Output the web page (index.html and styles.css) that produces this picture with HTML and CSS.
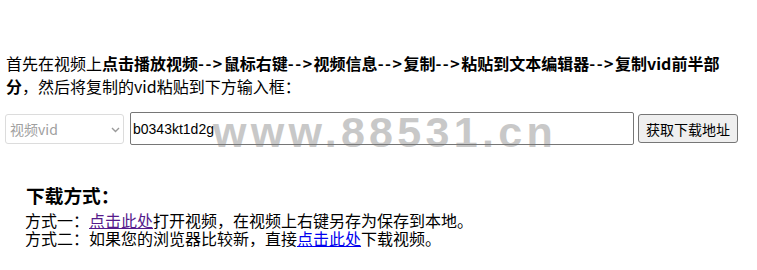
FILE: index.html
```html
<!DOCTYPE html>
<html lang="zh-CN">
<head>
<meta charset="utf-8">
<title>视频下载</title>
<link rel="stylesheet" href="styles.css">
</head>
<body>
<div class="page">
  <p class="intro">首先在视频上<b>点击播放视频<span class="arrow">--&gt;</span>鼠标右键<span class="arrow">--&gt;</span>视频信息<span class="arrow">--&gt;</span>复制<span class="arrow">--&gt;</span>粘贴到文本编辑器<span class="arrow">--&gt;</span>复制vid前半部分</b>，然后将复制的vid粘贴到下方输入框：</p>
  <div class="form-row">
    <div class="select-wrap">
      <select class="vid-select" disabled>
        <option>视频vid</option>
      </select>
      <svg class="chevron" width="9" height="6" viewBox="0 0 9 6"><path d="M1 1 L4.5 4.5 L8 1" fill="none" stroke="#9a9a9a" stroke-width="1.4"/></svg>
    </div>
    <input class="vid-input" type="text" value="b0343kt1d2g">
    <button class="get-btn" type="button">获取下载地址</button>
    <div class="watermark">www.88531.cn</div>
  </div>
  <div class="download">
    <h3 class="download-title">下载方式：</h3>
    <div class="method">方式一：<a class="visited" href="#">点击此处</a>打开视频，在视频上右键另存为保存到本地。</div>
    <div class="method">方式二：如果您的浏览器比较新，直接<a class="fresh" href="#">点击此处</a>下载视频。</div>
  </div>
</div>
</body>
</html>
```
FILE: styles.css
```css
html, body {
  margin: 0;
  padding: 0;
  background: #fff;
}
body {
  font-family: "Noto Sans CJK SC", "Noto Sans", sans-serif;
  font-size: 16px;
  color: #000;
}
.page {
  position: relative;
  width: 757px;
}
.intro {
  margin: 52px 0 0 6px;
  width: 722px;
  line-height: 23px;
}
.intro b {
  font-weight: bold;
}
.arrow {
  letter-spacing: 1.5px;
}
.form-row {
  position: relative;
  display: flex;
  align-items: center;
  margin-top: 14px;
  padding-left: 5px;
  height: 33px;
}
.select-wrap {
  position: relative;
  width: 119px;
  height: 30px;
}
.vid-select {
  appearance: none;
  -webkit-appearance: none;
  box-sizing: border-box;
  width: 119px;
  height: 30px;
  margin: 0;
  padding: 0 0 0 4px;
  border: 1px solid #dcdcdc;
  border-radius: 3px;
  background: #fff;
  color: #a0a0a0;
  font-family: "Noto Sans CJK SC", sans-serif;
  font-size: 14px;
  opacity: 1;
}
.chevron {
  position: absolute;
  right: 4px;
  top: 13px;
}
.vid-input {
  position: relative;
  z-index: 2;
  box-sizing: border-box;
  width: 504px;
  height: 33px;
  margin: 0 0 0 6px;
  padding: 1px 2px;
  border: 1px solid #767676;
  border-radius: 2px;
  background: transparent;
  color: #000;
  font-family: "Liberation Sans", Arial, sans-serif;
  font-size: 14px;
  outline: none;
}
.get-btn {
  box-sizing: border-box;
  width: 100px;
  height: 29px;
  margin: 0 0 0 4px;
  padding: 0;
  border: 1px solid #767676;
  border-radius: 3px;
  background: #efefef;
  color: #000;
  font-family: "Noto Sans CJK SC", sans-serif;
  font-size: 14px;
}
.watermark {
  position: absolute;
  z-index: 1;
  left: 213px;
  top: -1px;
  font-family: "Liberation Sans", Arial, sans-serif;
  font-weight: bold;
  font-size: 43px;
  line-height: 1;
  letter-spacing: 4.3px;
  color: #c8c8c8;
  white-space: nowrap;
  pointer-events: none;
}
.download {
  margin: 38px 0 0 25px;
}
.download-title {
  margin: 0 0 4px 1px;
  font-size: 18.72px;
  font-weight: bold;
  line-height: 24px;
}
.method {
  line-height: 18px;
}
.method a {
  text-decoration: underline;
}
.method a.visited {
  color: #551a8b;
}
.method a.fresh {
  color: #0000ee;
}
```
